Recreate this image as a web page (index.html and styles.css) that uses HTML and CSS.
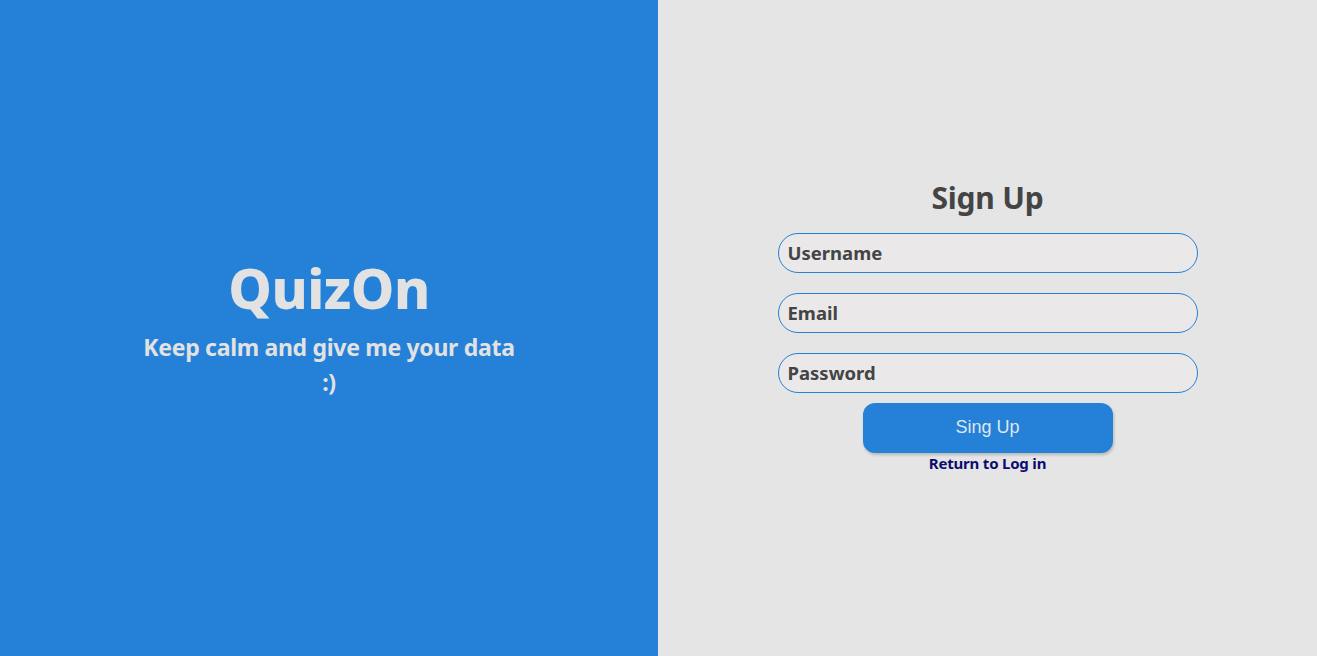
FILE: index.html
```html
<!DOCTYPE html>
<html lang="en">
<head>
<meta charset="utf-8">
<title>QuizOn - Sign Up</title>
<link rel="stylesheet" href="styles.css">
</head>
<body>
<div class="page">
  <section class="brand">
    <div class="brand-inner">
      <h1 class="logo">QuizOn</h1>
      <p class="tagline">Keep calm and give me your data :)</p>
    </div>
  </section>
  <section class="panel">
    <form class="form">
      <h2 class="title">Sign Up</h2>
      <input class="field" type="text" placeholder="Username">
      <input class="field" type="email" placeholder="Email">
      <input class="field" type="password" placeholder="Password">
      <button class="btn" type="button">Sing Up</button>
      <a class="link" href="#">Return to Log in</a>
    </form>
  </section>
</div>
</body>
</html>
```

FILE: styles.css
```css
* { box-sizing: border-box; }
html, body { margin: 0; padding: 0; height: 100%; }
body { font-family: "Noto Sans", "Open Sans", sans-serif; }
.page {
  display: grid;
  grid-template-columns: 658px 1fr;
  height: 656px;
}
.brand {
  background: #2481d7;
  display: flex;
  align-items: center;
  justify-content: center;
}
.brand-inner {
  text-align: center;
  width: 376px;
  color: #e2e2e2;
  margin-top: 2px;
}
.logo {
  margin: 0;
  font-size: 55px;
  font-weight: 800;
  line-height: 60px;
  letter-spacing: -0.5px;
}
.tagline {
  margin: 12px 0 0;
  font-size: 23px;
  font-weight: 700;
  line-height: 35px;
  letter-spacing: -0.3px;
}
.panel {
  background: #e5e5e5;
  display: flex;
  align-items: center;
  justify-content: center;
}
.form {
  width: 420px;
  display: flex;
  flex-direction: column;
  align-items: center;
  margin-top: -2px;
  margin-bottom: 4px;
}
.title {
  margin: 0 0 15px;
  font-size: 30px;
  font-weight: 700;
  line-height: 40px;
  color: #444444;
  letter-spacing: -0.2px;
}
.field {
  width: 420px;
  height: 40px;
  border: 1px solid #2481d7;
  border-radius: 20px;
  background: #eae8e9;
  padding: 0 9px;
  margin-bottom: 20px;
  font-family: "Noto Sans", sans-serif;
  font-size: 18.5px;
  font-weight: 700;
  color: #444;
  outline: none;
}
.field:last-of-type { margin-bottom: 10px; }
.field::placeholder { color: #444444; opacity: 1; }
.btn {
  width: 250px;
  height: 50px;
  border: none;
  border-radius: 12px;
  background: #2481d7;
  color: #dfe6ee;
  font-family: "Liberation Sans", Arial, sans-serif;
  font-size: 18px;
  box-shadow: 1px 2px 3px rgba(0,0,0,0.2);
}
.link {
  margin-top: 0;
  color: #0c0c70;
  font-size: 15px;
  font-weight: 700;
  line-height: 20px;
  text-decoration: none;
  letter-spacing: -0.2px;
}
```
